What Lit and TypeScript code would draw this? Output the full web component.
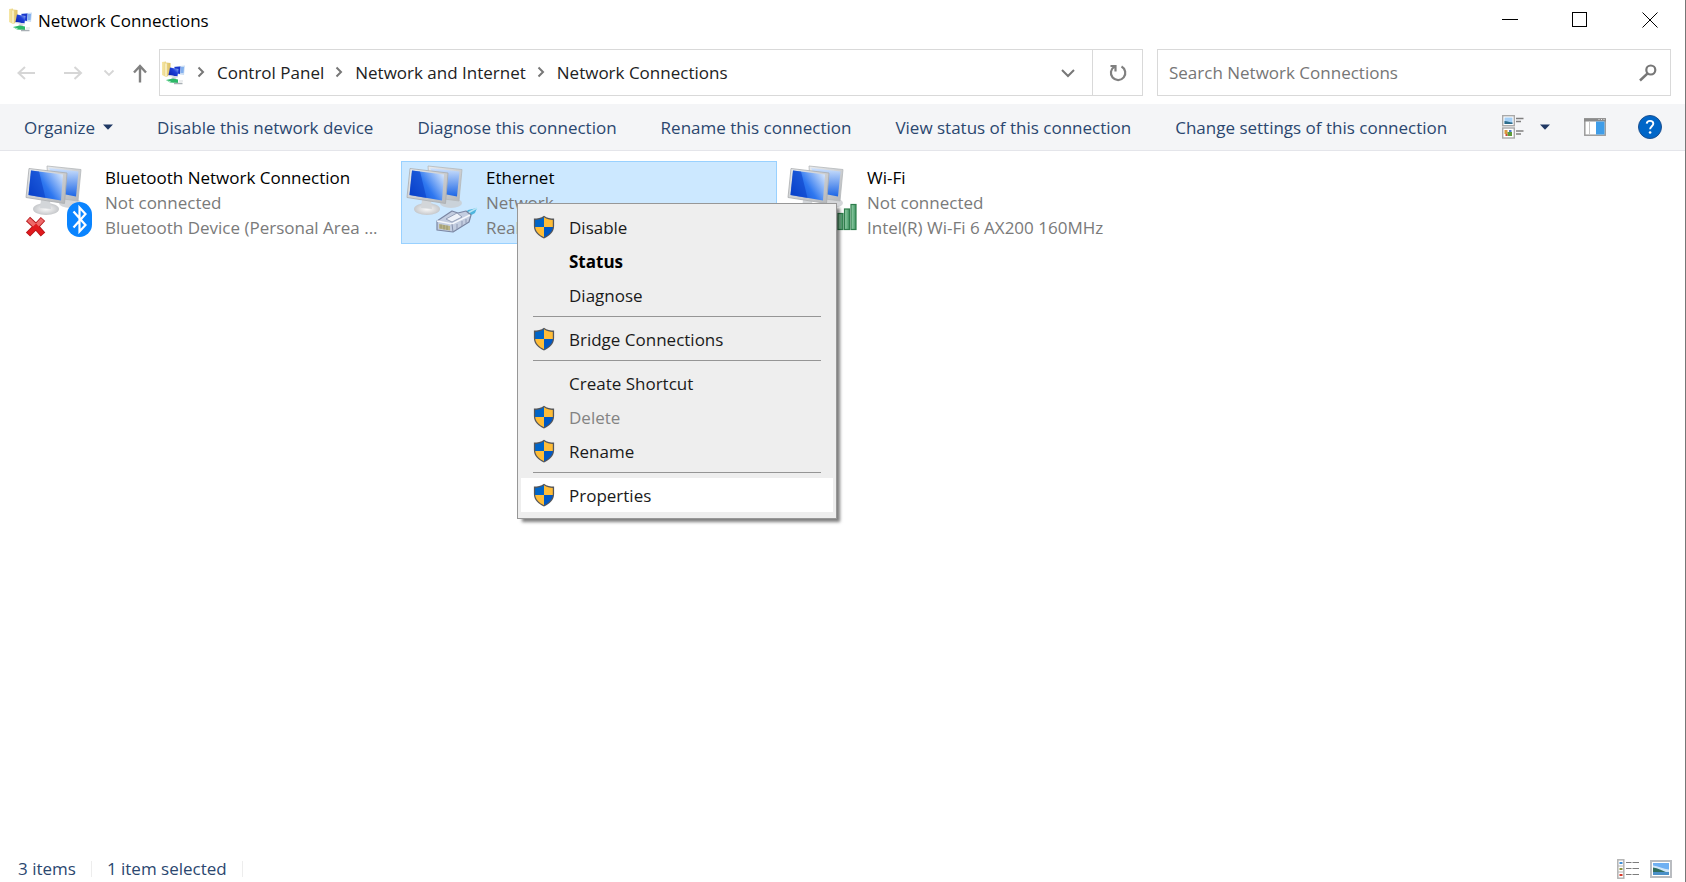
import { LitElement, html, css, svg, nothing } from "lit";
import { customElement, state } from "lit/decorators.js";
import { classMap } from "lit/directives/class-map.js";

const folderIcon = () => html`
  <svg class="folder" viewBox="0 0 24 24" width="24" height="24" aria-hidden="true">
    <defs>
      <linearGradient id="fold" x1="0" x2="1"><stop offset="0" stop-color="#f6e7a6" /><stop offset="1" stop-color="#dcbf62" /></linearGradient>
      <linearGradient id="mini" x1="0" x2="1" y1="1" y2="0"><stop offset="0" stop-color="#0a1ea8" /><stop offset=".6" stop-color="#1d3fd8" /><stop offset="1" stop-color="#a9c8f5" /></linearGradient>
    </defs>
    <path d="M0 1 4 .5 4 1.500 8.500 2 8.500 14 4 16 0 14z" fill="url(#fold)" />
    <path d="M4 2.500v13" stroke="#fbf3cb" stroke-width="1.500" />
    <path d="M12 5.500 23 4.500 22 14 14 13z" fill="#c9dcf3" />
    <path d="M12.500 6 18.500 5.500 18 13 13 12z" fill="#1b38cd" />
    <path d="M19 6 22 6 21.500 12 18.500 12z" fill="#83b0ee" />
    <path d="M8 6.500 16.500 8 15.500 15.500 6.500 14z" fill="url(#mini)" />
    <path d="M6 14.500 16 16" stroke="#d8dbe0" />
    <path d="M11 15.500 15 16.500 13 18.500 9 17.500z" fill="#d4d8dc" />
    <path d="M4 19 11 17.500 16 18.500 16 22 8 21.500z" fill="#2cb867" />
    <path d="M4 19 9 20.500 8 21.500z" fill="#b9ecce" />
    <path d="M12 22.500 20.500 22.500" stroke="#a9b0b5" stroke-width="1.500" />
    <path d="M17 20 21 20" stroke="#d7dbde" />
  </svg>`;

const shieldIcon = () => html`
  <svg viewBox="0 0 22 24" width="22" height="24" aria-hidden="true">
    <path d="M11 .7C8 2.900 4.500 3.600 .9 3.600V11c0 6 4.500 10 10.100 12.500C16.600 21 21.100 17 21.100 11V3.600C17.500 3.600 14 2.900 11 .7z" fill="#55565a" />
    <path d="M11 2.300C8.200 4.200 5.200 4.900 2.200 5V12H11z" fill="#0065c8" />
    <path d="M11 2.300c2.800 1.900 5.800 2.600 8.800 2.700V12H11z" fill="#ffbd37" />
    <path d="M2.200 12c.4 4.800 4.200 8.100 8.800 10.200V12z" fill="#ffbd37" />
    <path d="M19.800 12c-.4 4.800-4.200 8.100-8.800 10.200V12z" fill="#0058c4" />
  </svg>`;

type Kind = "bluetooth" | "ethernet" | "wifi";

const badge = (kind: Kind) => {
  if (kind === "bluetooth") {
    return svg`
      <path d="M3 54 11 61.500 18 54M18 69.500 11 61.500 3 69.500" fill="none" stroke="#b51518" stroke-width="6" stroke-linejoin="round" />
      <path d="M3.500 54.500 11 61.500 17.500 54.500" fill="none" stroke="#ee6a6a" stroke-width="4.200" />
      <path d="M3.500 69 11 61.500 17.500 69" fill="none" stroke="#e01a1e" stroke-width="4.200" />
      <rect x="42" y="37" width="25" height="35" rx="12.500" fill="#0a84ff" />
      <path d="M48.500 46.500 60.500 60 54.500 66.500V42.500L60.500 49 48.500 62.500" fill="none" stroke="#fff" stroke-width="2.200" />`;
  }
  if (kind === "ethernet") {
    return svg`
      <path d="M57 50 62 45 71 43 69 48 61 52.500z" fill="#4db4dc" />
      <path d="M62 48 71 43" stroke="#b6e4f5" stroke-width="1.500" />
      <path d="M31 56 46 46 52 48 60 46 65 50 63 57 47 67 31 65z" fill="#c3cde0" stroke="#7a86a2" stroke-width="1.200" stroke-linejoin="round" />
      <path d="M31 56 46 59 64 50" fill="none" stroke="#f4f7fc" stroke-width="1.500" />
      <path d="M46 59 47 67" stroke="#8490ab" />
      <path d="M40 54 51 48 56 52 46 57z" fill="#eef2f9" stroke="#8490ab" stroke-width=".8" />
      <path d="M33 59 44 61 44 65.500 33 63.500z" fill="#b9b487" />
      <path d="M35 59.500v4M38 60v4.500M41 60.500v4.500" stroke="#8d8a6a" stroke-width=".8" />
      <path d="M51 59 51 64M56 56v5M60 54v4" stroke="#8f9ab5" />`;
  }
  return svg`
    <g fill="url(#bar)" stroke="#2f7d4c" stroke-width="1.200">
      <rect x="44.500" y="53" width="5" height="11.500" />
      <rect x="51" y="48.500" width="5" height="16" />
      <rect x="57.500" y="44" width="5" height="20.500" />
      <rect x="64" y="39.500" width="5" height="25" />
    </g>`;
};

const pcIcon = (kind: Kind) => html`
  <svg class="pc" viewBox="0 0 72 74" width="72" height="74" aria-hidden="true">
    <defs>
      <linearGradient id="scr" x1="0" y1=".7" x2="1" y2=".1">
        <stop offset="0" stop-color="#0b49d2" /><stop offset=".45" stop-color="#2f78f0" /><stop offset="1" stop-color="#dceafd" />
      </linearGradient>
      <linearGradient id="scr2" x1="0" y1="1" x2="0" y2="0">
        <stop offset="0" stop-color="#1d66e6" /><stop offset="1" stop-color="#cfe2fc" />
      </linearGradient>
      <linearGradient id="frame" x1="0" y1="0" x2="1" y2="1">
        <stop offset="0" stop-color="#e9ebed" /><stop offset="1" stop-color="#b4b6b9" />
      </linearGradient>
      <linearGradient id="bar" x1="0" x2="1"><stop offset="0" stop-color="#9ad3ae" /><stop offset="1" stop-color="#3d9360" /></linearGradient>
      <radialGradient id="foot"><stop offset="0" stop-color="#fafafa" /><stop offset="1" stop-color="#c6c8cb" /></radialGradient>
    </defs>
    <ellipse cx="45" cy="38" rx="11" ry="5" fill="#c9ccd0" opacity=".8" />
    <path d="M22 1 56 4.500 53 36 24 32z" fill="url(#frame)" stroke="#b4b7ba" stroke-width=".8" />
    <path d="M24 3 53.500 6.500 51 31.500 38 29z" fill="url(#scr2)" />
    <ellipse cx="21" cy="44" rx="13" ry="6" fill="url(#foot)" />
    <path d="M16 35 25 36 26 44 15 43z" fill="#d3d6d9" />
    <path d="M4 3.500 42 8 39.500 38.500 1 32.500z" fill="url(#frame)" stroke="#a9acaf" stroke-width=".8" />
    <path d="M6 5.500 38 9.500 36 35.500 3.500 30z" fill="url(#scr)" />
    <path d="M6 5.500 14 6.500 20.500 33 3.500 30z" fill="#0a3cc4" opacity=".55" />
    ${badge(kind)}
  </svg>`;

const chevron = (dir: "right" | "down", cls = "") => html`
  <svg class=${cls} viewBox="0 0 14 14" width="14" height="14" aria-hidden="true">
    <path d=${dir === "right" ? "M4.500 2.500 9 7 4.500 11.500" : "M1 4 7 10 13 4"} fill="none" stroke="currentColor" stroke-width="2" />
  </svg>`;

const triangle = () => html`
  <svg viewBox="0 0 10 6" width="10" height="6" aria-hidden="true"><path d="M0 .5h10L5 5.800z" fill="#1f3864" /></svg>`;

const listIcon = () => html`
  <svg viewBox="0 0 22 20" width="22" height="20" aria-hidden="true">
    <rect x=".8" y=".8" width="6" height="18.400" fill="#fff" stroke="#b3b3b3" stroke-width="1.500" />
    <path d="M1 7h6M1 13h6" stroke="#b3b3b3" />
    <rect x="2.500" y="3" width="3" height="2" fill="#3f8fd8" /><rect x="2.500" y="9" width="3" height="2" fill="#8a9440" /><rect x="2.500" y="15" width="3" height="2" fill="#d83a2b" />
    <path d="M9 3.500h5.500M15.500 3.500H22M9 9.500h5.500M15.500 9.500H22M9 15.500h5.500M15.500 15.500H22" stroke="#7d7d7d" stroke-width="1.200" />
  </svg>`;

const pictureIcon = () => html`
  <svg viewBox="0 0 22 18" width="22" height="18" aria-hidden="true">
    <rect x="1" y="1" width="20" height="16" fill="#fff" stroke="#b9bcc0" stroke-width="2" />
    <rect x="3" y="3" width="16" height="12" fill="#6fb0f2" />
    <path d="M3 5.500C8 6 13 9 19 9.500V13H3z" fill="#cfe6fa" />
    <path d="M3 7.500C8 8 12 10.500 17 12.500H3z" fill="#2f6d5e" />
    <path d="M3 12h16v3H3z" fill="#4a90c8" />
  </svg>`;

const viewIcon = () => html`
  <svg viewBox="0 0 22 24" width="22" height="24" aria-hidden="true">
    <rect x=".7" y=".7" width="11.600" height="10" fill="#fff" stroke="#a9a9a9" stroke-width="1.400" />
    <rect x="2.500" y="2.500" width="8" height="6.500" fill="#a5d0f6" /><path d="M2.500 6c3 0 5 1.500 8 1.500V9h-8z" fill="#2c6c8b" />
    <rect x=".7" y="13" width="11.600" height="10" fill="#fff" stroke="#a9a9a9" stroke-width="1.400" />
    <rect x="2.500" y="15" width="3" height="4" fill="#d9973c" /><rect x="5.500" y="17" width="4.500" height="4" fill="#5c9a3a" /><rect x="7" y="15" width="2.500" height="2" fill="#4a78d0" /><rect x="3.500" y="19" width="2" height="2" fill="#cf4a35" />
    <path d="M14 3.500h7.500M14 6.500h5M14 16h7.500M14 19h5" stroke="#808080" stroke-width="1.400" />
  </svg>`;

const paneIcon = () => html`
  <svg viewBox="0 0 22 18" width="22" height="18" aria-hidden="true">
    <rect x=".8" y=".8" width="20.400" height="16.400" fill="#fff" stroke="#9b9b9b" stroke-width="1.500" />
    <path d="M0 2h22" stroke="#8b8b8b" stroke-width="3" /><path d="M14.500 1.500h1M17 1.500h1M19.500 1.500h1" stroke="#e8e8e8" />
    <path d="M5.500 3.500v13" stroke="#c4c4c4" />
    <rect x="12" y="3.500" width="8.500" height="13" fill="#3f9de8" />
  </svg>`;

const helpIcon = () => html`
  <svg viewBox="0 0 24 24" width="24" height="24" aria-hidden="true">
    <circle cx="12" cy="12" r="11.500" fill="#0066c8" stroke="#1b4f8f" />
    <path d="M8.700 8.600C8.900 6.800 10.200 5.900 12 5.900c1.900 0 3.300 1 3.300 2.800 0 2.400-3.200 2.700-3.200 5.600" fill="none" stroke="#fff" stroke-width="1.900" />
    <circle cx="12.100" cy="17.500" r="1.300" fill="#fff" />
  </svg>`;

interface Connection { kind: Kind; name: string; status: string; device: string; }
interface Entry { label: string; shield?: boolean; strong?: boolean; disabled?: boolean; active?: boolean; }

const connections: Connection[] = [
  { kind: "bluetooth", name: "Bluetooth Network Connection", status: "Not connected", device: "Bluetooth Device (Personal Area ..." },
  { kind: "ethernet", name: "Ethernet", status: "Network", device: "Realtek PCIe GbE Controller" },
  { kind: "wifi", name: "Wi-Fi", status: "Not connected", device: "Intel(R) Wi-Fi 6 AX200 160MHz" },
];

const groups: Entry[][] = [
  [{ label: "Disable", shield: true }, { label: "Status", strong: true }, { label: "Diagnose" }],
  [{ label: "Bridge Connections", shield: true }],
  [{ label: "Create Shortcut" }, { label: "Delete", shield: true, disabled: true }, { label: "Rename", shield: true }],
  [{ label: "Properties", shield: true, active: true }],
];

const resets = css`
  * { box-sizing: border-box; }
  button, input { font: inherit; color: inherit; background: none; border: 0; padding: 0; margin: 0; }
  button { display: flex; align-items: center; white-space: nowrap; }
  svg { display: block; flex: none; }
`;

@customElement("context-menu")
export class ContextMenu extends LitElement {
  static styles = [resets, css`
    :host {
      display: block;
      width: 320px;
      padding: 6px 3px;
      background: #eee;
      border: 1px solid #979797;
      box-shadow: 4px 4px 3px -1px rgba(0, 0, 0, 0.5);
      color: #1a1a1a;
    }
    .entry { width: 100%; height: 34px; padding-left: 12px; }
    .mark { width: 36px; flex: none; }
    .strong { font-weight: 700; color: #000; }
    .disabled { color: #838383; }
    .active { background: #fff; }
    .line { height: 1px; margin: 4px 12px 5px; border: 0; background: #959595; }
  `];

  render() {
    return html`<div role="menu">
      ${groups.map((group, i) => html`
        ${i ? html`<hr class="line" />` : nothing}
        ${group.map((e) => html`
          <button role="menuitem" ?disabled=${e.disabled}
            class=${classMap({ entry: true, strong: !!e.strong, disabled: !!e.disabled, active: !!e.active })}>
            <span class="mark">${e.shield ? shieldIcon() : nothing}</span>${e.label}
          </button>`)}`)}
    </div>`;
  }
}

@customElement("app-root")
export class AppRoot extends LitElement {
  @state() private selected = 1;

  static styles = [resets, css`
    :host {
      display: flex;
      flex-direction: column;
      min-height: 100vh;
      background: #fff;
      border-right: 1px solid #777;
      font-family: "Open Sans", "Noto Sans", sans-serif;
      font-size: 17px;
      line-height: 25px;
      color: #000;
    }
    .title { display: flex; align-items: center; height: 40px; padding-left: 9px; gap: 5px; }
    .caption { flex: 1; font-size: 17px; font-weight: 400; margin: 0; }
    .window { display: flex; }
    .window button { width: 70px; height: 40px; justify-content: center; }
    .nav { display: flex; align-items: center; padding: 9px 14px 8px 16px; }
    .steps { display: flex; align-items: center; width: 143px; color: #d6d6d6; }
    .steps button { height: 46px; }
    .back { width: 48px; }
    .forward { width: 39px; }
    .recent { width: 29px; }
    .up { color: #808080; }
    .address { flex: 1; min-width: 0; height: 47px; display: flex; align-items: center; border: 1px solid #d9d9d9; padding-left: 2px; color: #222; }
    .crumbs { flex: 1; display: flex; align-items: center; overflow: hidden; white-space: nowrap; }
    .crumbs a { color: inherit; text-decoration: none; }
    .sep { color: #777; margin: 0 9px 2px 8px; }
    .drop { width: 48px; height: 45px; justify-content: center; color: #777; }
    .refresh { width: 50px; height: 45px; justify-content: center; border-left: 1px solid #d9d9d9; color: #808080; }
    .search { flex: 0 1 514px; height: 47px; margin-left: 14px; display: flex; align-items: center; border: 1px solid #d9d9d9; padding: 0 13px 0 11px; }
    .search input { flex: 1; min-width: 0; outline: 0; }
    .search input::placeholder { color: #767676; opacity: 1; }
    .tools { display: flex; align-items: center; height: 47px; padding: 0 23px 0 24px; background: #f4f5f7; border-bottom: 1px solid #e4e5ea; color: #2b476f; }
    .commands { flex: 1; display: flex; gap: 44px; }
    .organize { gap: 8px; }
    .views { display: flex; align-items: center; }
    .view { gap: 16px; }
    .pane { margin: 0 32px 0 34px; }
    .files { flex: 1; display: grid; grid-template-columns: repeat(auto-fill, 376px); gap: 5px; align-content: start; padding: 10px 20px; }
    .cell { position: relative; }
    .item { width: 100%; height: 83px; padding: 3px 4px; align-items: flex-start; gap: 8px; border: 1px solid transparent; text-align: left; }
    .selected { background: #cce8ff; border-color: #99d1ff; }
    .text { display: flex; flex-direction: column; min-width: 0; color: #7a7a7a; }
    .name { color: #000; }
    .menu { position: absolute; left: 116px; top: 42px; z-index: 2; }
    .status { display: flex; align-items: center; height: 26px; padding: 0 13px 0 18px; color: #2b476f; }
    .count { padding-right: 15px; margin-right: 15px; border-right: 1px solid #ededed; line-height: 16px; }
    .modes { display: flex; align-items: center; gap: 11px; margin-left: auto; }
  `];

  render() {
    return html`
      <header class="title">
        ${folderIcon()}
        <h1 class="caption">Network Connections</h1>
        <div class="window">
          <button aria-label="Minimize"><svg viewBox="0 0 16 16" width="16" height="16"><path d="M0 7.500h16" stroke="#000" /></svg></button>
          <button aria-label="Maximize"><svg viewBox="0 0 16 16" width="16" height="16"><rect x=".5" y=".5" width="14" height="14" fill="none" stroke="#000" /></svg></button>
          <button aria-label="Close"><svg viewBox="0 0 16 16" width="16" height="16"><path d="M.5.5l15 15M15.500.5l-15 15" stroke="#000" /></svg></button>
        </div>
      </header>
      <nav class="nav">
        <div class="steps">
          <button class="back" aria-label="Back"><svg viewBox="0 0 20 16" width="20" height="16"><path d="M19 8H2.500M9 2 2.500 8 9 14" fill="none" stroke="currentColor" stroke-width="2" /></svg></button>
          <button class="forward" aria-label="Forward"><svg viewBox="0 0 20 16" width="20" height="16"><path d="M0 8h17M10.500 2 17 8l-6.500 6" fill="none" stroke="currentColor" stroke-width="2" /></svg></button>
          <button class="recent" aria-label="Recent locations"><svg viewBox="0 0 12 12" width="12" height="12"><path d="M1.500 3.500 6 8l4.500-4.500" fill="none" stroke="currentColor" stroke-width="1.800" /></svg></button>
          <button class="up" aria-label="Up"><svg viewBox="0 0 16 20" width="16" height="20"><path d="M8 19.500V3M2 9.500 8 3l6 6.500" fill="none" stroke="currentColor" stroke-width="2.400" /></svg></button>
        </div>
        <div class="address">
          <div class="crumbs">
            ${folderIcon()}
            ${["Control Panel", "Network and Internet", "Network Connections"].map((c) => html`${chevron("right", "sep")}<a href="#">${c}</a>`)}
          </div>
          <button class="drop" aria-label="Previous locations">${chevron("down")}</button>
          <button class="refresh" aria-label="Refresh">
            <svg viewBox="0 0 18 18" width="18" height="18"><path d="M12.500 2.500A7.200 7.200 0 1 1 5.500 2.600M1.500 2H6.500V7.500" fill="none" stroke="currentColor" stroke-width="2.200" /></svg>
          </button>
        </div>
        <label class="search">
          <input type="text" aria-label="Search Network Connections" placeholder="Search Network Connections" />
          <svg viewBox="0 0 18 18" width="18" height="18" aria-hidden="true"><circle cx="11.800" cy="6" r="4.500" fill="none" stroke="#777" stroke-width="2.200" /><path d="M8.500 9.500 1 16.500" stroke="#777" stroke-width="2.400" /></svg>
        </label>
      </nav>
      <div class="tools">
        <div class="commands">
          <button class="organize">Organize ${triangle()}</button>
          <button>Disable this network device</button>
          <button>Diagnose this connection</button>
          <button>Rename this connection</button>
          <button>View status of this connection</button>
          <button>Change settings of this connection</button>
        </div>
        <div class="views">
          <button class="view" aria-label="Change your view">${viewIcon()}${triangle()}</button>
          <button class="pane" aria-label="Preview pane">${paneIcon()}</button>
          <button aria-label="Help">${helpIcon()}</button>
        </div>
      </div>
      <main class="files">
        ${connections.map((c, i) => html`
          <div class="cell">
            <button class=${classMap({ item: true, selected: i === this.selected })} @click=${() => (this.selected = i)}>
              ${pcIcon(c.kind)}
              <span class="text"><span class="name">${c.name}</span><span>${c.status}</span><span>${c.device}</span></span>
            </button>
            ${c.kind === "ethernet" ? html`<context-menu class="menu"></context-menu>` : nothing}
          </div>`)}
      </main>
      <footer class="status">
        <span class="count">3 items</span><span class="count">1 item selected</span>
        <div class="modes">
          <button aria-label="Details">${listIcon()}</button>
          <button aria-label="Large icons">${pictureIcon()}</button>
        </div>
      </footer>`;
  }
}
